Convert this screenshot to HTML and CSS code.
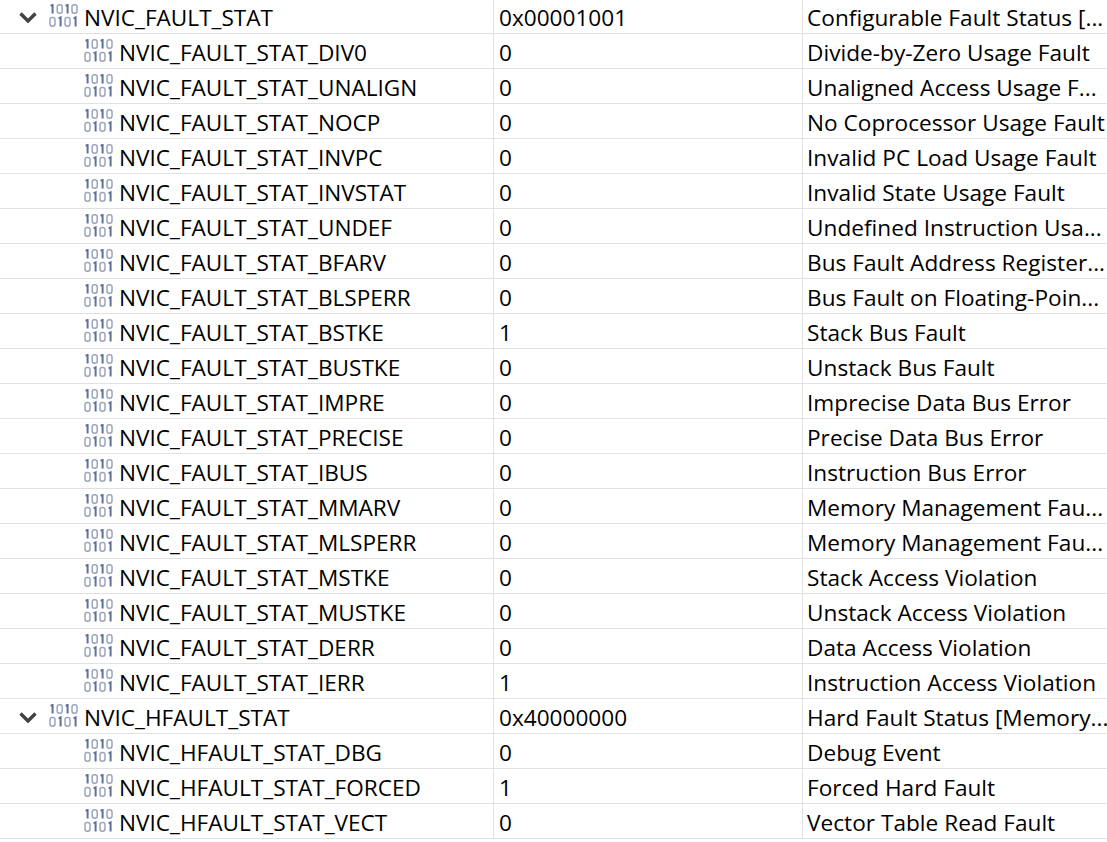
FILE: index.html
```html
<!DOCTYPE html>
<html lang="en">
<head>
    <meta charset="UTF-8">
    <meta name="viewport" content="width=device-width, initial-scale=1.0">
    <title>Fault Registers</title>
    <link rel="stylesheet" href="styles.css">
</head>
<body>
    <svg class="defs" width="0" height="0">
        <symbol id="bits" viewBox="0 0 30 23">
            <g fill="none" stroke="#9aa5bc" stroke-width="1.5">
                <rect x="8.2" y="0.8" width="5" height="8.4" rx="2.2"/>
                <rect x="23" y="0.8" width="5" height="8.4" rx="2.2"/>
                <rect x="1" y="13.4" width="5" height="8.8" rx="2.2"/>
                <rect x="16" y="13.4" width="5" height="8.8" rx="2.2"/>
            </g>
            <g fill="none" stroke="#5f7299" stroke-width="2">
                <path d="M1.6 1.8 L3.6 0.8 V9.6"/>
                <path d="M16.6 1.8 L18.6 0.8 V9.6"/>
                <path d="M9.6 14.4 L11.6 13.4 V22.6"/>
                <path d="M24.6 14.4 L26.6 13.4 V22.6"/>
            </g>
        </symbol>
        <symbol id="chevron" viewBox="0 0 18 11">
            <path d="M1.5 1.5 L9 9 L16.5 1.5" fill="none" stroke="#424242" stroke-width="3.4"/>
        </symbol>
    </svg>

    <div class="tree">
        <div class="row parent">
            <div class="cell name"><svg class="chevron"><use href="#chevron"/></svg><svg class="bits"><use href="#bits"/></svg><span>NVIC_FAULT_STAT</span></div>
            <div class="cell">0x00001001</div>
            <div class="cell desc">Configurable Fault Status [...</div>
        </div>
        <div class="row">
            <div class="cell name"><svg class="bits"><use href="#bits"/></svg><span>NVIC_FAULT_STAT_DIV0</span></div>
            <div class="cell">0</div>
            <div class="cell desc">Divide-by-Zero Usage Fault</div>
        </div>
        <div class="row">
            <div class="cell name"><svg class="bits"><use href="#bits"/></svg><span>NVIC_FAULT_STAT_UNALIGN</span></div>
            <div class="cell">0</div>
            <div class="cell desc">Unaligned Access Usage F...</div>
        </div>
        <div class="row">
            <div class="cell name"><svg class="bits"><use href="#bits"/></svg><span>NVIC_FAULT_STAT_NOCP</span></div>
            <div class="cell">0</div>
            <div class="cell desc">No Coprocessor Usage Fault</div>
        </div>
        <div class="row">
            <div class="cell name"><svg class="bits"><use href="#bits"/></svg><span>NVIC_FAULT_STAT_INVPC</span></div>
            <div class="cell">0</div>
            <div class="cell desc">Invalid PC Load Usage Fault</div>
        </div>
        <div class="row">
            <div class="cell name"><svg class="bits"><use href="#bits"/></svg><span>NVIC_FAULT_STAT_INVSTAT</span></div>
            <div class="cell">0</div>
            <div class="cell desc">Invalid State Usage Fault</div>
        </div>
        <div class="row">
            <div class="cell name"><svg class="bits"><use href="#bits"/></svg><span>NVIC_FAULT_STAT_UNDEF</span></div>
            <div class="cell">0</div>
            <div class="cell desc">Undefined Instruction Usa...</div>
        </div>
        <div class="row">
            <div class="cell name"><svg class="bits"><use href="#bits"/></svg><span>NVIC_FAULT_STAT_BFARV</span></div>
            <div class="cell">0</div>
            <div class="cell desc">Bus Fault Address Register...</div>
        </div>
        <div class="row">
            <div class="cell name"><svg class="bits"><use href="#bits"/></svg><span>NVIC_FAULT_STAT_BLSPERR</span></div>
            <div class="cell">0</div>
            <div class="cell desc">Bus Fault on Floating-Poin...</div>
        </div>
        <div class="row">
            <div class="cell name"><svg class="bits"><use href="#bits"/></svg><span>NVIC_FAULT_STAT_BSTKE</span></div>
            <div class="cell">1</div>
            <div class="cell desc">Stack Bus Fault</div>
        </div>
        <div class="row">
            <div class="cell name"><svg class="bits"><use href="#bits"/></svg><span>NVIC_FAULT_STAT_BUSTKE</span></div>
            <div class="cell">0</div>
            <div class="cell desc">Unstack Bus Fault</div>
        </div>
        <div class="row">
            <div class="cell name"><svg class="bits"><use href="#bits"/></svg><span>NVIC_FAULT_STAT_IMPRE</span></div>
            <div class="cell">0</div>
            <div class="cell desc">Imprecise Data Bus Error</div>
        </div>
        <div class="row">
            <div class="cell name"><svg class="bits"><use href="#bits"/></svg><span>NVIC_FAULT_STAT_PRECISE</span></div>
            <div class="cell">0</div>
            <div class="cell desc">Precise Data Bus Error</div>
        </div>
        <div class="row">
            <div class="cell name"><svg class="bits"><use href="#bits"/></svg><span>NVIC_FAULT_STAT_IBUS</span></div>
            <div class="cell">0</div>
            <div class="cell desc">Instruction Bus Error</div>
        </div>
        <div class="row">
            <div class="cell name"><svg class="bits"><use href="#bits"/></svg><span>NVIC_FAULT_STAT_MMARV</span></div>
            <div class="cell">0</div>
            <div class="cell desc">Memory Management Fau...</div>
        </div>
        <div class="row">
            <div class="cell name"><svg class="bits"><use href="#bits"/></svg><span>NVIC_FAULT_STAT_MLSPERR</span></div>
            <div class="cell">0</div>
            <div class="cell desc">Memory Management Fau...</div>
        </div>
        <div class="row">
            <div class="cell name"><svg class="bits"><use href="#bits"/></svg><span>NVIC_FAULT_STAT_MSTKE</span></div>
            <div class="cell">0</div>
            <div class="cell desc">Stack Access Violation</div>
        </div>
        <div class="row">
            <div class="cell name"><svg class="bits"><use href="#bits"/></svg><span>NVIC_FAULT_STAT_MUSTKE</span></div>
            <div class="cell">0</div>
            <div class="cell desc">Unstack Access Violation</div>
        </div>
        <div class="row">
            <div class="cell name"><svg class="bits"><use href="#bits"/></svg><span>NVIC_FAULT_STAT_DERR</span></div>
            <div class="cell">0</div>
            <div class="cell desc">Data Access Violation</div>
        </div>
        <div class="row">
            <div class="cell name"><svg class="bits"><use href="#bits"/></svg><span>NVIC_FAULT_STAT_IERR</span></div>
            <div class="cell">1</div>
            <div class="cell desc">Instruction Access Violation</div>
        </div>
        <div class="row parent">
            <div class="cell name"><svg class="chevron"><use href="#chevron"/></svg><svg class="bits"><use href="#bits"/></svg><span>NVIC_HFAULT_STAT</span></div>
            <div class="cell">0x40000000</div>
            <div class="cell desc">Hard Fault Status [Memory...</div>
        </div>
        <div class="row">
            <div class="cell name"><svg class="bits"><use href="#bits"/></svg><span>NVIC_HFAULT_STAT_DBG</span></div>
            <div class="cell">0</div>
            <div class="cell desc">Debug Event</div>
        </div>
        <div class="row">
            <div class="cell name"><svg class="bits"><use href="#bits"/></svg><span>NVIC_HFAULT_STAT_FORCED</span></div>
            <div class="cell">1</div>
            <div class="cell desc">Forced Hard Fault</div>
        </div>
        <div class="row">
            <div class="cell name"><svg class="bits"><use href="#bits"/></svg><span>NVIC_HFAULT_STAT_VECT</span></div>
            <div class="cell">0</div>
            <div class="cell desc">Vector Table Read Fault</div>
        </div>
    </div>
</body>
</html>
```
FILE: styles.css
```css
html, body {
    height: 100%;
}

body {
    font-family: "Open Sans", "Noto Sans", sans-serif;
    font-size: 22.6px;
    color: #000;
    background: #fff;
    margin: 0;
    overflow: hidden;
}

.defs {
    display: block;
    height: 0;
}

.tree {
    margin-top: -1px;
}

.row {
    display: grid;
    grid-template-columns: 494px 309px 304px;
    height: 35px;
    border-bottom: 1px solid #e1e1e1;
    box-sizing: border-box;
}

.cell {
    display: flex;
    align-items: center;
    padding: 2px 0 0 5px;
    border-right: 1px solid #e1e1e1;
    white-space: nowrap;
    overflow: hidden;
    box-sizing: border-box;
}

.desc {
    padding-left: 4px;
    letter-spacing: 0.03px;
    border-right: none;
}

.name {
    padding-left: 84px;
}

.parent .name {
    padding-left: 19px;
}

.bits {
    width: 30px;
    height: 23px;
    margin: 0 5px 4px 0;
    flex: none;
}

.chevron {
    width: 18px;
    height: 11px;
    margin-right: 12px;
    flex: none;
}
```
